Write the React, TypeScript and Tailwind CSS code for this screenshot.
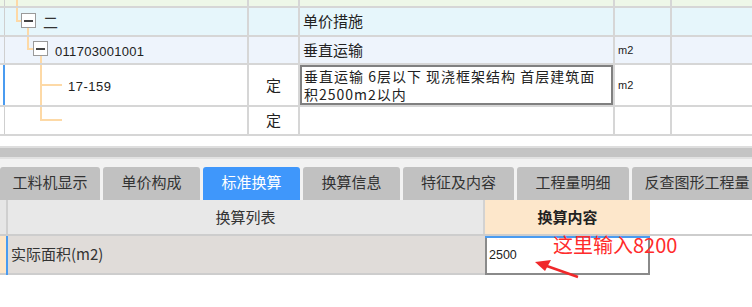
import type { ReactNode } from 'react';

const cjk = { fontFamily: '"Noto Sans CJK SC", "Liberation Sans", sans-serif' };
const sans = { fontFamily: '"Liberation Sans", "Noto Sans CJK SC", sans-serif' };

// 树形折叠框
const Box = ({ className }: { className: string }) => (
  <span className={`absolute w-[15px] h-[15px] border border-[#9a9a9a] bg-white flex items-center justify-center ${className}`}>
    <span className="block w-[9px] h-[2px] bg-[#444]" />
  </span>
);

// 橙色树线
const Line = ({ className }: { className: string }) => (
  <span className={`absolute bg-[#fdd9a6] ${className}`} />
);

type RowProps = {
  bg: string;
  h: string;
  tree: ReactNode;
  kind?: string;
  desc?: ReactNode;
  unit?: string;
  active?: boolean;
};

const Row = ({ bg, h, tree, kind, desc, unit, active }: RowProps) => (
  <div className={`flex ${h} ${bg} border-b-2 border-[#d6d6d6]`}>
    <div className="relative w-[249px] shrink-0 border-r-2 border-[#d6d6d6]">
      <span className="absolute left-0 top-0 bottom-0 w-[5px] border-r border-[#cfcfcf]" />
      {active && <span className="absolute left-[3px] top-0 bottom-0 w-[2px] bg-[#4a9bf0]" />}
      {tree}
    </div>
    <div className="w-[51px] shrink-0 border-r-2 border-[#d6d6d6] flex items-center justify-center text-[15px] text-[#222]" style={cjk}>
      {kind}
    </div>
    <div className="w-[315px] shrink-0 border-r-2 border-[#d6d6d6] flex items-center text-[15px] text-[#222]" style={cjk}>
      {desc}
    </div>
    <div className="w-[57px] shrink-0 border-r-2 border-[#d6d6d6] flex items-center pl-[3px] text-[11px] text-[#222]" style={sans}>
      {unit}
    </div>
    <div className="flex-1" />
  </div>
);

const tabs = ['工料机显示', '单价构成', '标准换算', '换算信息', '特征及内容', '工程量明细', '反查图形工程量'];
const tabWidths = ['w-[100px]', 'w-[97px]', 'w-[97px]', 'w-[97px]', 'w-[111px]', 'w-[112px]', 'w-[130px]'];

export default function App() {
  return (
    <div className="w-[752px] h-[307px] overflow-hidden bg-white relative">
      {/* 上部清单表格 */}
      <div className="-mt-[28px] h-[163px] border-b border-[#cfcfcf]">
        <Row
          bg="bg-[#eef7e8]"
          h="h-[36px]"
          tree={<Line className="left-[16px] top-0 bottom-0 w-[2px]" />}
          desc={<span className="pl-[3px]">超高施工增加</span>}
          unit="项"
        />
        <Row
          bg="bg-[#e6f6fb]"
          h="h-[29px]"
          tree={
            <>
              <Line className="left-[16px] top-0 h-[14px] w-[2px]" />
              <Line className="left-[16px] top-[12px] w-[6px] h-[2px]" />
              <Box className="left-[21px] top-[5px]" />
              <Line className="left-[27px] top-[20px] bottom-0 w-[2px]" />
              <span className="absolute left-[43px] top-[3px] text-[15px] text-[#333]" style={cjk}>二</span>
            </>
          }
          desc={<span className="pl-[3px]">单价措施</span>}
        />
        <Row
          bg="bg-[#eef4fc]"
          h="h-[28px]"
          tree={
            <>
              <Line className="left-[27px] top-0 h-[13px] w-[2px]" />
              <Line className="left-[27px] top-[11px] w-[7px] h-[2px]" />
              <Box className="left-[33px] top-[4px]" />
              <Line className="left-[40px] top-[19px] bottom-0 w-[2px]" />
              <span className="absolute left-[55px] top-[5px] text-[13px] text-[#222] tracking-[0.3px]" style={sans}>011703001001</span>
            </>
          }
          desc={<span className="pl-[3px]">垂直运输</span>}
          unit="m2"
        />
        <Row
          bg="bg-white"
          h="h-[42px]"
          active
          tree={
            <>
              <Line className="left-[40px] top-0 bottom-0 w-[2px]" />
              <Line className="left-[40px] top-[19px] w-[22px] h-[2px]" />
              <span className="absolute left-[68px] top-[12px] text-[13px] text-[#222] tracking-[0.5px]" style={sans}>17-159</span>
            </>
          }
          kind="定"
          desc={
            <div className="h-full w-full border-2 border-[#808080] pl-[2px] leading-[18px] text-[14px] tracking-[1px] whitespace-pre">
              {'垂直运输 6层以下 现浇框架结构 首层建筑面\n积2500m2以内'}
            </div>
          }
          unit="m2"
        />
        <Row
          bg="bg-white"
          h="h-[29px]"
          tree={
            <>
              <Line className="left-[40px] top-0 h-[14px] w-[2px]" />
              <Line className="left-[40px] top-[12px] w-[22px] h-[2px]" />
            </>
          }
          kind="定"
        />
      </div>

      {/* 分隔条 */}
      <div className="h-[11px]" />
      <div className="h-[2px] bg-[#dedede]" />
      <div className="h-[9px] bg-[#c4c4c4]" />
      <div className="h-[2px] bg-[#e2e2e2]" />

      {/* 页签 */}
      <div className="bg-[#f2f2f2] pt-[8px] flex gap-[3px]" style={cjk}>
        {tabs.map((t, i) => (
          <div
            key={t}
            className={`${tabWidths[i]} shrink-0 h-[33px] rounded-t-[3px] flex items-center justify-center pb-[3px] text-[15px] ${
              t === '标准换算' ? 'bg-[#3f97fb] text-white' : 'bg-[#c1c1c1] text-[#333]'
            }`}
          >
            {t}
          </div>
        ))}
      </div>

      {/* 换算列表 */}
      <div className="flex h-[36px] border-b-2 border-[#cdcdcd]" style={cjk}>
        <div className="w-[8px] shrink-0 bg-[#e6e6e6] border-r-2 border-[#cfcfcf]" />
        <div className="w-[477px] shrink-0 bg-[#e8e8e8] border-r-2 border-[#d2d2d2] flex items-center justify-center text-[15px] text-[#333]">
          换算列表
        </div>
        <div className="w-[165px] shrink-0 bg-[#fde7cb] flex items-center justify-center text-[15px] font-bold text-[#222]">
          换算内容
        </div>
        <div className="flex-1 bg-white" />
      </div>
      <div className="flex h-[39px]" style={cjk}>
        <div className="w-[6px] shrink-0 bg-[#fde6c8] border-b-2 border-[#cdcdcd]" />
        <div className="w-[2px] shrink-0 bg-[#4a9bf0]" />
        <div className="w-[477px] shrink-0 bg-[#e0dcd9] border-b-2 border-[#cdcdcd] flex items-center pl-[3px] text-[15px] text-[#333]">
          实际面积(m2)
        </div>
        <div className="w-[165px] shrink-0 bg-white border-2 border-t-0 border-[#8a8a8a] flex flex-col">
          <div className="h-[2px] bg-[#4a9bf0] -mx-[2px]" />
          <div className="flex-1 flex items-center pl-[2px] text-[12.5px] text-[#222]" style={sans}>
            2500
          </div>
        </div>
        <div className="flex-1" />
      </div>

      {/* 红色标注 */}
      <div className="absolute left-[553px] top-[233px] text-[20px] leading-[24px] text-[#ff2b2b]" style={cjk}>
        这里输入8200
      </div>
      <svg className="absolute left-[530px] top-[255px]" width="56" height="26" viewBox="0 0 56 26">
        <path d="M48 22 L14 10" stroke="#f0282a" strokeWidth="2.5" fill="none" />
        <path d="M5 7 L21 5 L15 16 Z" fill="#f0282a" />
      </svg>
    </div>
  );
}
